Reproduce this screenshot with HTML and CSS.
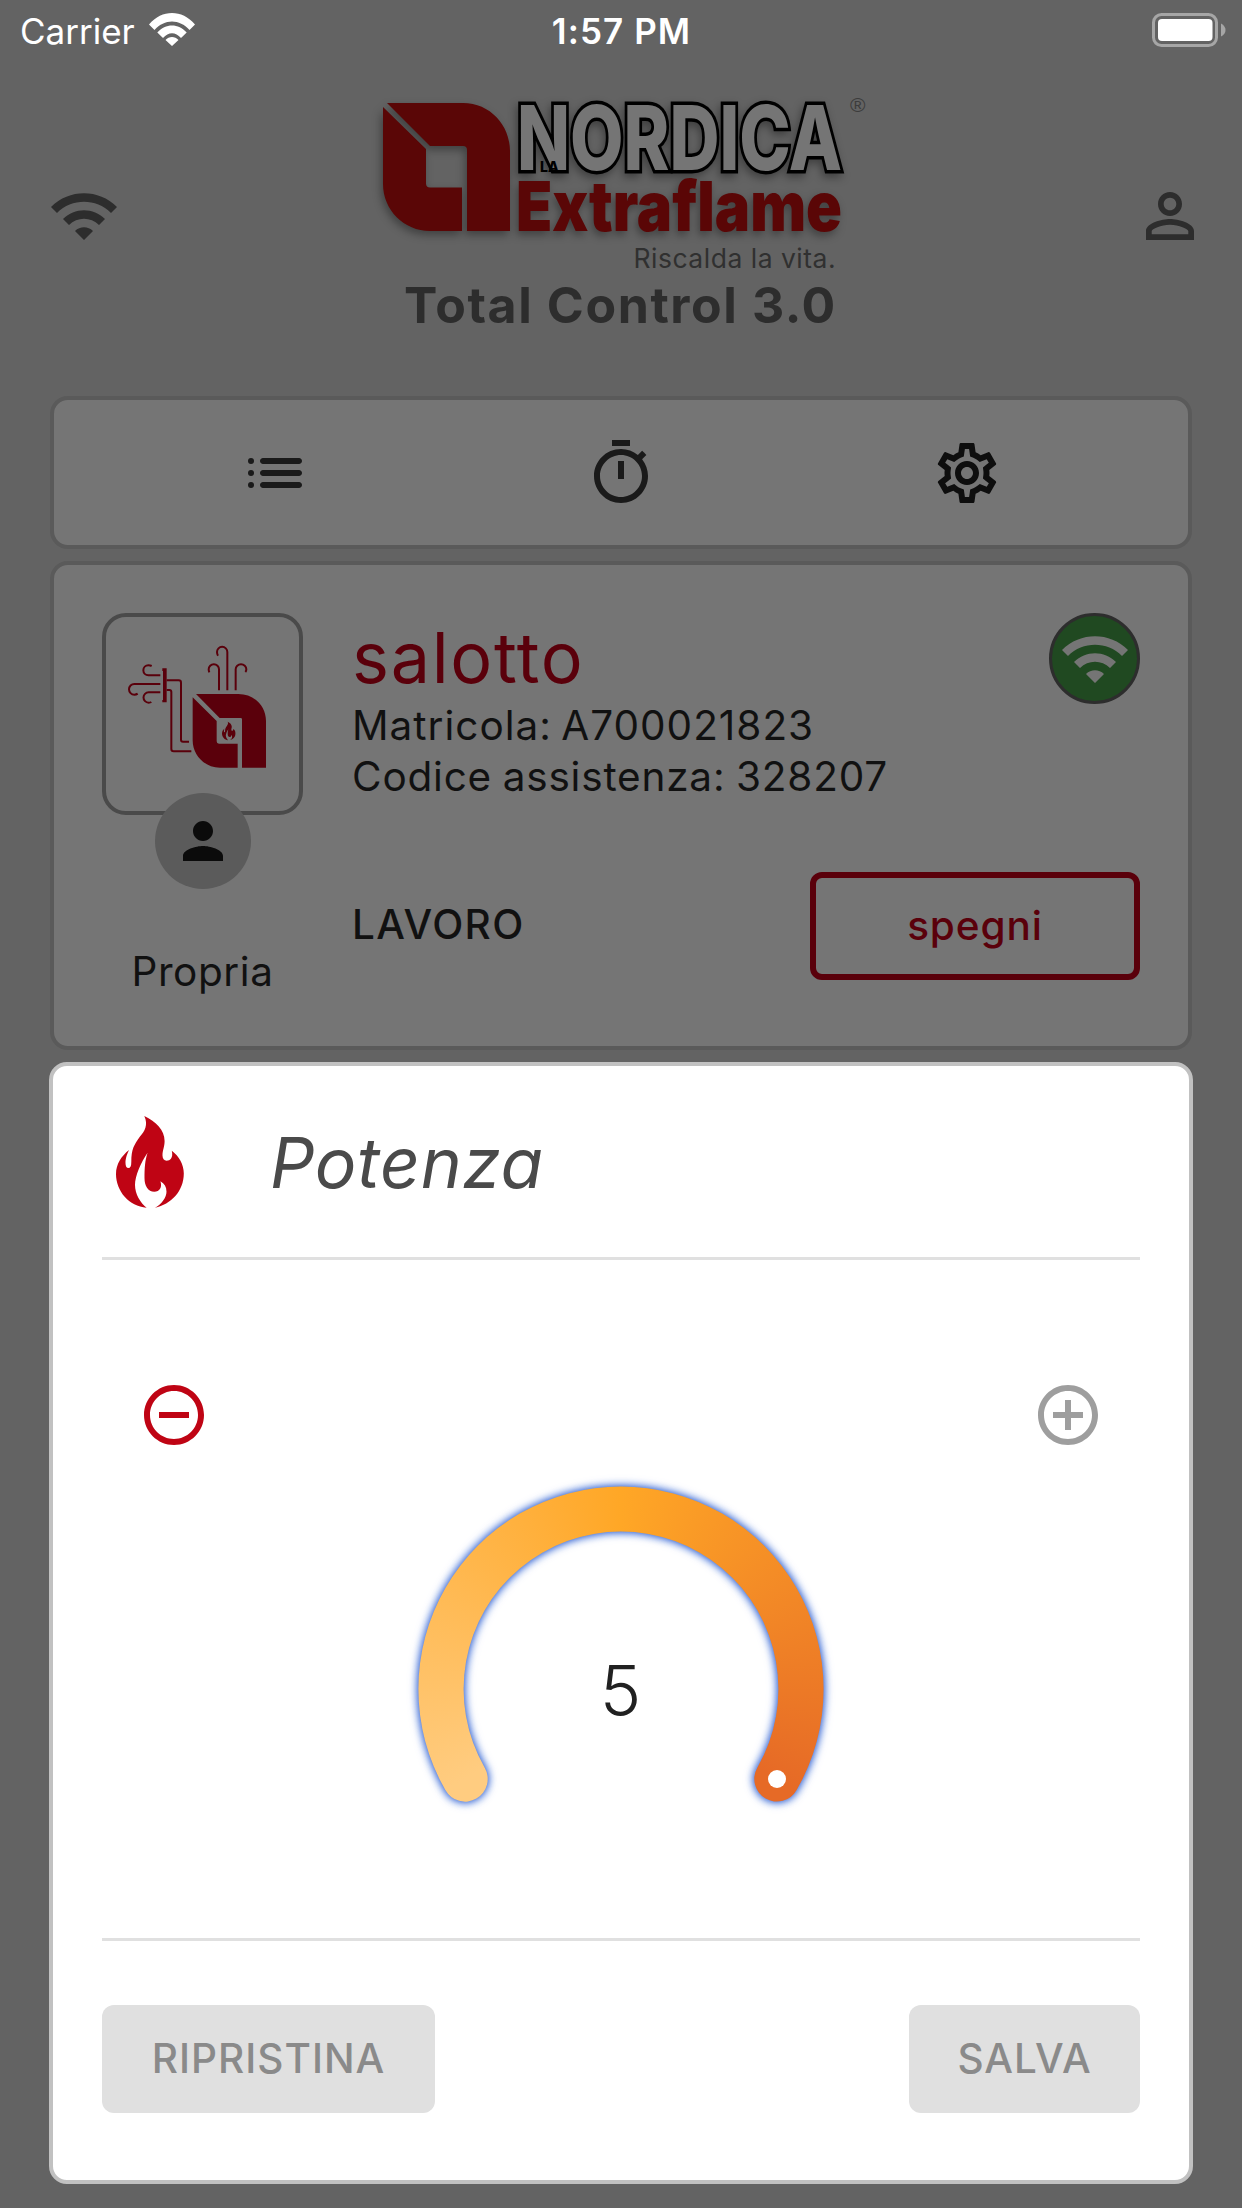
FILE: index.html
```
<!DOCTYPE html>
<html lang="it">
<head>
    <meta charset="UTF-8">
    <meta name="viewport" content="width=device-width, initial-scale=1.0">
    <title>Total Control 3.0</title>
    <link rel="stylesheet" href="styles.css">
</head>
<body>
<svg class="defs" width="0" height="0">
    <symbol id="wifi" viewBox="0 0 24 24">
        <path d="M1 9l2 2c4.97-4.97 13.03-4.97 18 0l2-2C16.93 2.93 7.08 2.93 1 9zm8 8l3 3 3-3c-1.65-1.66-4.34-1.66-6 0zm-4-4l2 2c2.76-2.76 7.24-2.76 10 0l2-2C15.14 9.14 8.87 9.14 5 13z"/>
    </symbol>
    <symbol id="flame" viewBox="0 0 68 92">
        <path d="M28.3 0C40 5.5 48.6 14 48.6 25C48.6 31 46.5 34 46.5 39.5C46.5 42.5 48 44.7 50.7 44.7C54 44.7 57.5 42 55.8 34.7C63 40 67.8 48.5 67.8 57.5C67.8 75 55 88.5 39 91.7C46 88 50.5 81 50.5 75.7C50.5 71 48.5 67.5 44.4 65.3C46.5 71.5 43.5 75.7 38.3 75.7C32 75.7 28.5 70 28.5 62C28.5 52 29 44 31.6 36.7C25 46 19 60 19 69C19 78 24.5 87 30.6 91.7C13 90.5 0 75 0 58C0 48 5.5 40 13 34C10 40 9.5 44 9.5 47C9.5 50 10.5 52 12.4 52C14.5 52 15.3 50 15.3 46C15.3 33 18 29 24 20.5C28.5 15.5 32.5 9 28.3 0Z"/>
    </symbol>
</svg>

<div class="status-bar">
    <div class="carrier">
        <span>Carrier</span>
        <svg class="signal" viewBox="0 0 46 33">
            <path d="M0 11.5C13-3.8 33-3.8 46 11.5L40.5 17C30.5 5.500 15.500 5.500 5.500 17ZM8.300 19.500C16.500 10 29.500 10 37.700 19.500L32 25C26.500 18.500 19.500 18.500 14 25ZM16.500 27C20 23 26 23 29.500 27L23 33Z"/>
        </svg>
    </div>
    <div class="clock">1:57 PM</div>
    <svg class="battery" viewBox="0 0 74 34">
        <rect class="battery-case" x="1.500" y="1.500" width="63" height="31" rx="8"/>
        <rect x="6" y="6" width="54.500" height="22" rx="4"/>
        <path class="battery-tip" d="M69 10.500Q73.500 13 73.500 17T69 23.500Z"/>
    </svg>
</div>

<header class="header">
    <svg class="icon header-icon" viewBox="0 0 24 24"><use href="#wifi"/></svg>
    <div class="brand">
        <svg class="logo" viewBox="371 90 500 190">
            <g class="logo-shadow">
                <path class="logo-red" d="M387 102H463C490 102 510 124 510 150V230H467V149Q467 145 463 145H430Z"/>
                <path class="logo-red" d="M383 106L426 148V182.500Q426 186.500 430 186.500H462V230H430C404 230 383 209 383 183Z"/>
                <text class="logo-nordica" x="517" y="169" textLength="325" lengthAdjust="spacingAndGlyphs">NORDICA</text>
                <text class="logo-extra" x="516" y="230" textLength="326" lengthAdjust="spacingAndGlyphs">Extraflame</text>
            </g>
            <text class="logo-la" x="540" y="171">LA</text>
            <text class="logo-reg" x="850" y="111">®</text>
            <text class="logo-claim" x="633.500" y="267">Riscalda la vita.</text>
        </svg>
        <h1>Total Control 3.0</h1>
    </div>
    <svg class="icon header-icon" viewBox="0 0 24 24">
        <path d="M12 5.900c1.160 0 2.100.94 2.100 2.100s-.94 2.100-2.100 2.100S9.900 9.160 9.900 8s.94-2.100 2.100-2.100m0 9c2.970 0 6.100 1.460 6.100 2.100v1.100H5.900V17c0-.64 3.130-2.100 6.100-2.100M12 4C9.790 4 8 5.790 8 8s1.790 4 4 4 4-1.790 4-4-1.790-4-4-4zm0 9c-2.670 0-8 1.340-8 4v3h16v-3c0-2.660-5.330-4-8-4z"/>
    </svg>
</header>

<nav class="card tabs">
    <svg class="icon" viewBox="0 0 24 24">
        <path d="M7 8c0-.55.45-1 1-1h12c.55 0 1 .45 1 1s-.45 1-1 1H8c-.55 0-1-.45-1-1zm0 4c0-.55.45-1 1-1h12c.55 0 1 .45 1 1s-.45 1-1 1H8c-.55 0-1-.45-1-1zm0 4c0-.55.45-1 1-1h12c.55 0 1 .45 1 1s-.45 1-1 1H8c-.55 0-1-.45-1-1z"/>
        <circle cx="4" cy="8" r="1"/>
        <circle cx="4" cy="12" r="1"/>
        <circle cx="4" cy="16" r="1"/>
    </svg>
    <svg class="icon" viewBox="0 0 24 24">
        <path d="M15 1H9v2h6V1zm-4 13h2V8h-2v6zm8.030-6.610l1.420-1.420c-.43-.51-.9-.99-1.410-1.410l-1.420 1.420C16.070 4.740 14.120 4 12 4c-4.970 0-9 4.030-9 9s4.020 9 9 9 9-4.030 9-9c0-2.120-.74-4.070-1.970-5.610zM12 20c-3.870 0-7-3.130-7-7s3.130-7 7-7 7 3.130 7 7-3.130 7-7 7z"/>
    </svg>
    <svg class="icon icon-dark" viewBox="0 0 24 24">
        <path d="M19.430 12.980c.04-.32.07-.64.07-.98 0-.34-.03-.66-.07-.98l2.110-1.650c.19-.15.24-.42.12-.64l-2-3.460c-.09-.16-.26-.25-.44-.25-.06 0-.12.01-.17.03l-2.490 1c-.52-.4-1.080-.73-1.690-.98l-.38-2.650C14.460 2.180 14.250 2 14 2h-4c-.25 0-.46.18-.49.42l-.38 2.650c-.61.25-1.170.59-1.690.98l-2.490-1c-.06-.02-.12-.03-.18-.03-.17 0-.34.09-.43.25l-2 3.460c-.13.22-.07.49.12.64l2.110 1.650c-.04.32-.07.65-.07.98 0 .33.03.66.07.98l-2.110 1.650c-.19.15-.24.42-.12.64l2 3.460c.09.16.26.25.44.25.06 0 .12-.01.17-.03l2.490-1c.52.4 1.080.73 1.690.98l.38 2.650c.03.24.24.42.49.42h4c.25 0 .46-.18.49-.42l.38-2.650c.61-.25 1.170-.59 1.690-.98l2.490 1c.06.02.12.03.18.03.17 0 .34-.09.43-.25l2-3.460c.12-.22.07-.49-.12-.64l-2.110-1.650zm-1.980-1.710c.04.31.05.52.05.73 0 .21-.02.43-.05.73l-.14 1.130.89.7 1.080.84-.7 1.210-1.270-.51-1.040-.42-.9.68c-.43.32-.84.56-1.250.73l-1.060.43-.16 1.130-.2 1.350h-1.400l-.19-1.350-.16-1.130-1.060-.43c-.43-.18-.83-.41-1.230-.71l-.91-.7-1.060.43-1.270.51-.7-1.210 1.080-.84.89-.7-.14-1.130c-.03-.31-.05-.54-.05-.74s.02-.43.05-.73l.14-1.130-.89-.7-1.080-.84.7-1.210 1.270.51 1.040.42.9-.68c.43-.32.84-.56 1.250-.73l1.060-.43.16-1.130.2-1.350h1.390l.19 1.350.16 1.130 1.060.43c.43.18.83.41 1.230.71l.91.7 1.060-.43 1.270-.51.7 1.210-1.070.85-.89.7.14 1.130zM12 8c-2.210 0-4 1.790-4 4s1.790 4 4 4 4-1.790 4-4-1.790-4-4-4zm0 6c-1.100 0-2-.9-2-2s.9-2 2-2 2 .9 2 2-.9 2-2 2z"/>
    </svg>
</nav>

<section class="card stove">
    <div class="stove-side">
        <div class="stove-thumb">
            <svg viewBox="50 53 579 579">
                <g class="thumb-lines">
                    <path d="M414 270V155a15 15 0 0 0-31 0q0 6 3 11"/>
                    <path d="M389 270V207a15.500 15.500 0 0 0-31 0q0 5 2 9"/>
                    <path d="M439 270V207a16 15.500 0 0 1 32 0q0 5-3 8"/>
                    <path d="M213 225H177a15 15 0 0 1 0-30q6 0 10 2"/>
                    <path d="M213 251H135a16 16 0 0 0 0 32q6 0 10-3"/>
                    <path d="M213 276H178a15 15 0 0 0 0 31q5 0 8-2"/>
                    <path d="M232 240H268q7 0 7 7V418q0 6 6 6H299"/>
                    <path d="M232 269H240q6 0 6 6V446q0 7 7 7H306"/>
                </g>
                <path d="M219 204H232V306H219V299H221V212H219Z"/>
                <path d="M320 281H447C495 281 530 317 530 362V502H458V357q0-4-4-4H391Z"/>
                <path d="M310 291L382 362V423q0 7 7 7H445V502H392C345 502 310 464 310 420Z"/>
                <use href="#flame" x="398" y="362" width="41" height="60"/>
            </svg>
        </div>
        <div class="stove-owner">
            <svg viewBox="0 0 24 24">
                <path d="M12 12c2.210 0 4-1.790 4-4s-1.790-4-4-4-4 1.790-4 4 1.790 4 4 4zm0 2c-2.670 0-8 1.340-8 4v2h16v-2c0-2.660-5.330-4-8-4z"/>
            </svg>
        </div>
        <div class="owner-label">Propria</div>
    </div>
    <div class="stove-main">
        <div class="stove-info">
            <div>
                <h2>salotto</h2>
                <p class="serial">Matricola: A700021823</p>
                <p class="support">Codice assistenza: 328207</p>
            </div>
            <div class="online">
                <svg class="icon" viewBox="0 0 24 24"><use href="#wifi"/></svg>
            </div>
        </div>
        <div class="stove-state">
            <span class="state-label">LAVORO</span>
            <button class="btn-outline">spegni</button>
        </div>
    </div>
</section>

<section class="sheet">
    <div class="sheet-header">
        <svg class="flame" viewBox="0 0 68 92"><use href="#flame"/></svg>
        <h2>Potenza</h2>
    </div>
    <hr>
    <div class="power">
        <div class="power-controls">
            <svg class="icon icon-minus" viewBox="0 0 24 24">
                <path d="M7 11v2h10v-2H7zm5-9C6.480 2 2 6.480 2 12s4.480 10 10 10 10-4.480 10-10S17.520 2 12 2zm0 18c-4.410 0-8-3.590-8-8s3.590-8 8-8 8 3.590 8 8-3.590 8-8 8z"/>
            </svg>
            <svg class="icon icon-plus" viewBox="0 0 24 24">
                <path d="M13 7h-2v4H7v2h4v4h2v-4h4v-2h-4V7zm-1-5C6.480 2 2 6.480 2 12s4.480 10 10 10 10-4.480 10-10S17.520 2 12 2zm0 18c-4.410 0-8-3.590-8-8s3.590-8 8-8 8 3.590 8 8-3.590 8-8 8z"/>
            </svg>
        </div>
        <div class="dial">
            <div class="dial-glow"><div class="dial-arc"></div></div>
            <span class="dial-handle"></span>
            <span class="dial-value">5</span>
        </div>
    </div>
    <hr>
    <div class="sheet-actions">
        <button class="btn-flat btn-reset" disabled>RIPRISTINA</button>
        <button class="btn-flat btn-save" disabled>SALVA</button>
    </div>
</section>
</body>
</html>
```
FILE: styles.css
```
* {
    box-sizing: border-box;
    margin: 0;
    padding: 0;
}

body {
    width: 1242px;
    height: 2208px;
    display: flex;
    flex-direction: column;
    font-family: Inter, "Liberation Sans", sans-serif;
    font-size: 40.5px;
    line-height: 51px;
    background-color: #636363;
    color: #111;
    overflow: hidden;
}

svg {
    display: block;
    fill: currentColor;
}

.defs {
    position: absolute;
}

.icon {
    width: 72px;
    height: 72px;
}

/* status bar */
.status-bar {
    display: grid;
    grid-template-columns: 1fr auto 1fr;
    align-items: center;
    height: 62px;
    padding: 0 16px 0 20px;
    color: #fff;
    font-size: 35px;
}

.carrier {
    display: flex;
    align-items: center;
    gap: 14px;
}

.signal {
    width: 46px;
    height: 33px;
    margin-bottom: 3px;
}

.clock {
    margin-left: -3px;
    font-weight: 600;
    letter-spacing: 1.1px;
}

.battery {
    width: 74px;
    height: 34px;
    margin-bottom: 2px;
    justify-self: end;
}

.battery-case {
    fill: none;
    stroke: #a6a6a6;
    stroke-width: 3;
}

.battery-tip {
    fill: #a6a6a6;
}

/* header */
.header {
    display: flex;
    justify-content: space-between;
    align-items: center;
    padding: 28px 36px 0 48px;
    height: 268px;
    color: #2d2d2d;
}

.header-icon {
    margin-top: 12px;
}

.brand {
    display: flex;
    flex-direction: column;
    align-items: center;
    margin-left: -12px;
}

.logo {
    width: 500px;
    height: 190px;
}

.logo-shadow {
    filter: drop-shadow(-2px 4px 4px rgba(0, 0, 0, 0.35));
}

.logo-red,
.logo-extra {
    fill: #5a0606;
}

.logo-nordica {
    font-size: 89px;
    font-weight: 800;
    fill: #757575;
    stroke: #000;
    stroke-width: 7px;
    paint-order: stroke;
}

.logo-extra {
    font-size: 69px;
    font-weight: 900;
}

.logo-la {
    font-size: 14px;
    font-weight: 800;
    fill: #000;
}

.logo-reg {
    font-family: "Liberation Sans", sans-serif;
    font-size: 21px;
    fill: #3c3c3c;
}

.logo-claim {
    font-size: 26.5px;
    letter-spacing: 0.5px;
    fill: #303030;
}

h1 {
    margin-left: -1px;
    font-size: 50px;
    font-weight: 700;
    line-height: 48px;
    letter-spacing: 1.6px;
}

/* cards */
.card {
    margin: 0 50px;
    border: 4px solid #5a5a5a;
    border-radius: 18px;
    background-color: #757575;
}

.tabs {
    display: flex;
    justify-content: center;
    align-items: center;
    gap: 274px;
    height: 153px;
    margin-top: 66px;
    color: #1a1a1a;
}

.icon-dark {
    color: #0e0e0e;
}

.stove {
    display: flex;
    gap: 49px;
    height: 489px;
    margin-top: 12px;
    padding: 48px;
}

.stove-side {
    display: flex;
    flex-direction: column;
    align-items: center;
    width: 201px;
}

.stove-thumb {
    width: 201px;
    height: 202px;
    border: 4px solid #4a4a4a;
    border-radius: 24px;
    color: #5a000b;
}

.stove-thumb svg {
    margin-top: 1px;
}

.thumb-lines {
    fill: none;
    stroke: currentColor;
    stroke-width: 6;
}

.stove-owner {
    display: flex;
    align-items: center;
    justify-content: center;
    width: 96px;
    height: 96px;
    margin-top: -22px;
    border-radius: 50%;
    background-color: #5b5b5b;
    color: #0b0b0b;
    z-index: 1;
}

.stove-owner svg {
    width: 60px;
    height: 60px;
}

.owner-label {
    margin-top: 57px;
    letter-spacing: 0.6px;
}

.stove-main {
    flex: 1;
}

.stove-info {
    display: flex;
    justify-content: space-between;
    height: 188px;
}

.stove-info h2 {
    padding-top: 3px;
    font-size: 70px;
    font-weight: 400;
    line-height: 84px;
    letter-spacing: 1.7px;
    color: #5a000b;
}

.serial {
    letter-spacing: 1px;
    word-spacing: -3px;
}

.support {
    letter-spacing: 0.8px;
    word-spacing: -1.5px;
}

.online {
    display: flex;
    align-items: center;
    justify-content: center;
    width: 91px;
    height: 91px;
    border: 3px solid #2d2d2d;
    border-radius: 50%;
    background-color: #204921;
    color: #757575;
}

.stove-state {
    display: flex;
    justify-content: space-between;
    align-items: center;
    margin-top: 71px;
}

.state-label {
    padding-bottom: 3px;
    font-weight: 500;
    letter-spacing: 1.4px;
}

button {
    font-family: inherit;
    font-size: 40.5px;
    font-weight: 500;
    height: 108px;
    border-radius: 12px;
}

.btn-outline {
    width: 330px;
    padding-bottom: 2px;
    border: 6px solid #5a000b;
    background: none;
    color: #5a000b;
    letter-spacing: 0.9px;
}

/* power sheet */
.sheet {
    height: 1122px;
    margin: 12px 49px 0;
    padding: 0 49px;
    border: 4px solid #c1c1c1;
    border-radius: 18px;
    background-color: #fff;
}

.sheet-header {
    display: flex;
    align-items: center;
    gap: 86px;
    height: 191px;
    padding-left: 14px;
}

.flame {
    width: 68px;
    height: 92px;
    color: #bf0414;
}

.sheet-header h2 {
    padding-top: 2px;
    font-size: 69.5px;
    font-style: italic;
    font-weight: 400;
    line-height: 84px;
    letter-spacing: 0.7px;
    color: #4a4a4a;
}

hr {
    height: 3px;
    border: none;
    background-color: #e0e0e0;
}

.power {
    height: 678px;
    padding-top: 119px;
}

.power-controls {
    display: flex;
    justify-content: space-between;
    padding: 0 36px;
}

.icon-minus {
    color: #bf0414;
}

.icon-plus {
    color: #9e9e9e;
}

.dial {
    position: relative;
    display: flex;
    align-items: center;
    justify-content: center;
    width: 406px;
    height: 406px;
    margin: 35px auto 0;
}

.dial-glow {
    position: absolute;
    inset: 0;
    filter: drop-shadow(0 0 4px #1f55d0) drop-shadow(0 0 3px rgba(31, 85, 208, 0.4));
}

.dial-arc {
    width: 406px;
    height: 406px;
    background: conic-gradient(from 232deg, #ffcc80 8deg, #ffa726 128deg, #e66a26 248deg);
    clip-path: path("M27.5 304.3A202.6 202.6 0 1 1 378.5 304.3A22.6 22.6 0 0 1 339.3 281.7A157.4 157.4 0 1 0 66.7 281.7A22.6 22.6 0 0 1 27.5 304.3Z");
}

.dial-handle {
    position: absolute;
    left: 350px;
    top: 284px;
    width: 18px;
    height: 18px;
    border-radius: 50%;
    background-color: #fff;
}

.dial-value {
    position: relative;
    padding: 3px 1px 0 0;
    font-size: 70px;
    font-weight: 300;
    line-height: 84px;
    color: #212121;
}

.sheet-actions {
    display: flex;
    justify-content: space-between;
    padding-top: 64px;
}

.btn-flat {
    padding-bottom: 1px;
    border: none;
    background-color: #e0e0e0;
    color: #8a8a8a;
    letter-spacing: 1px;
}

.btn-reset {
    width: 333px;
}

.btn-save {
    width: 231px;
}
```
